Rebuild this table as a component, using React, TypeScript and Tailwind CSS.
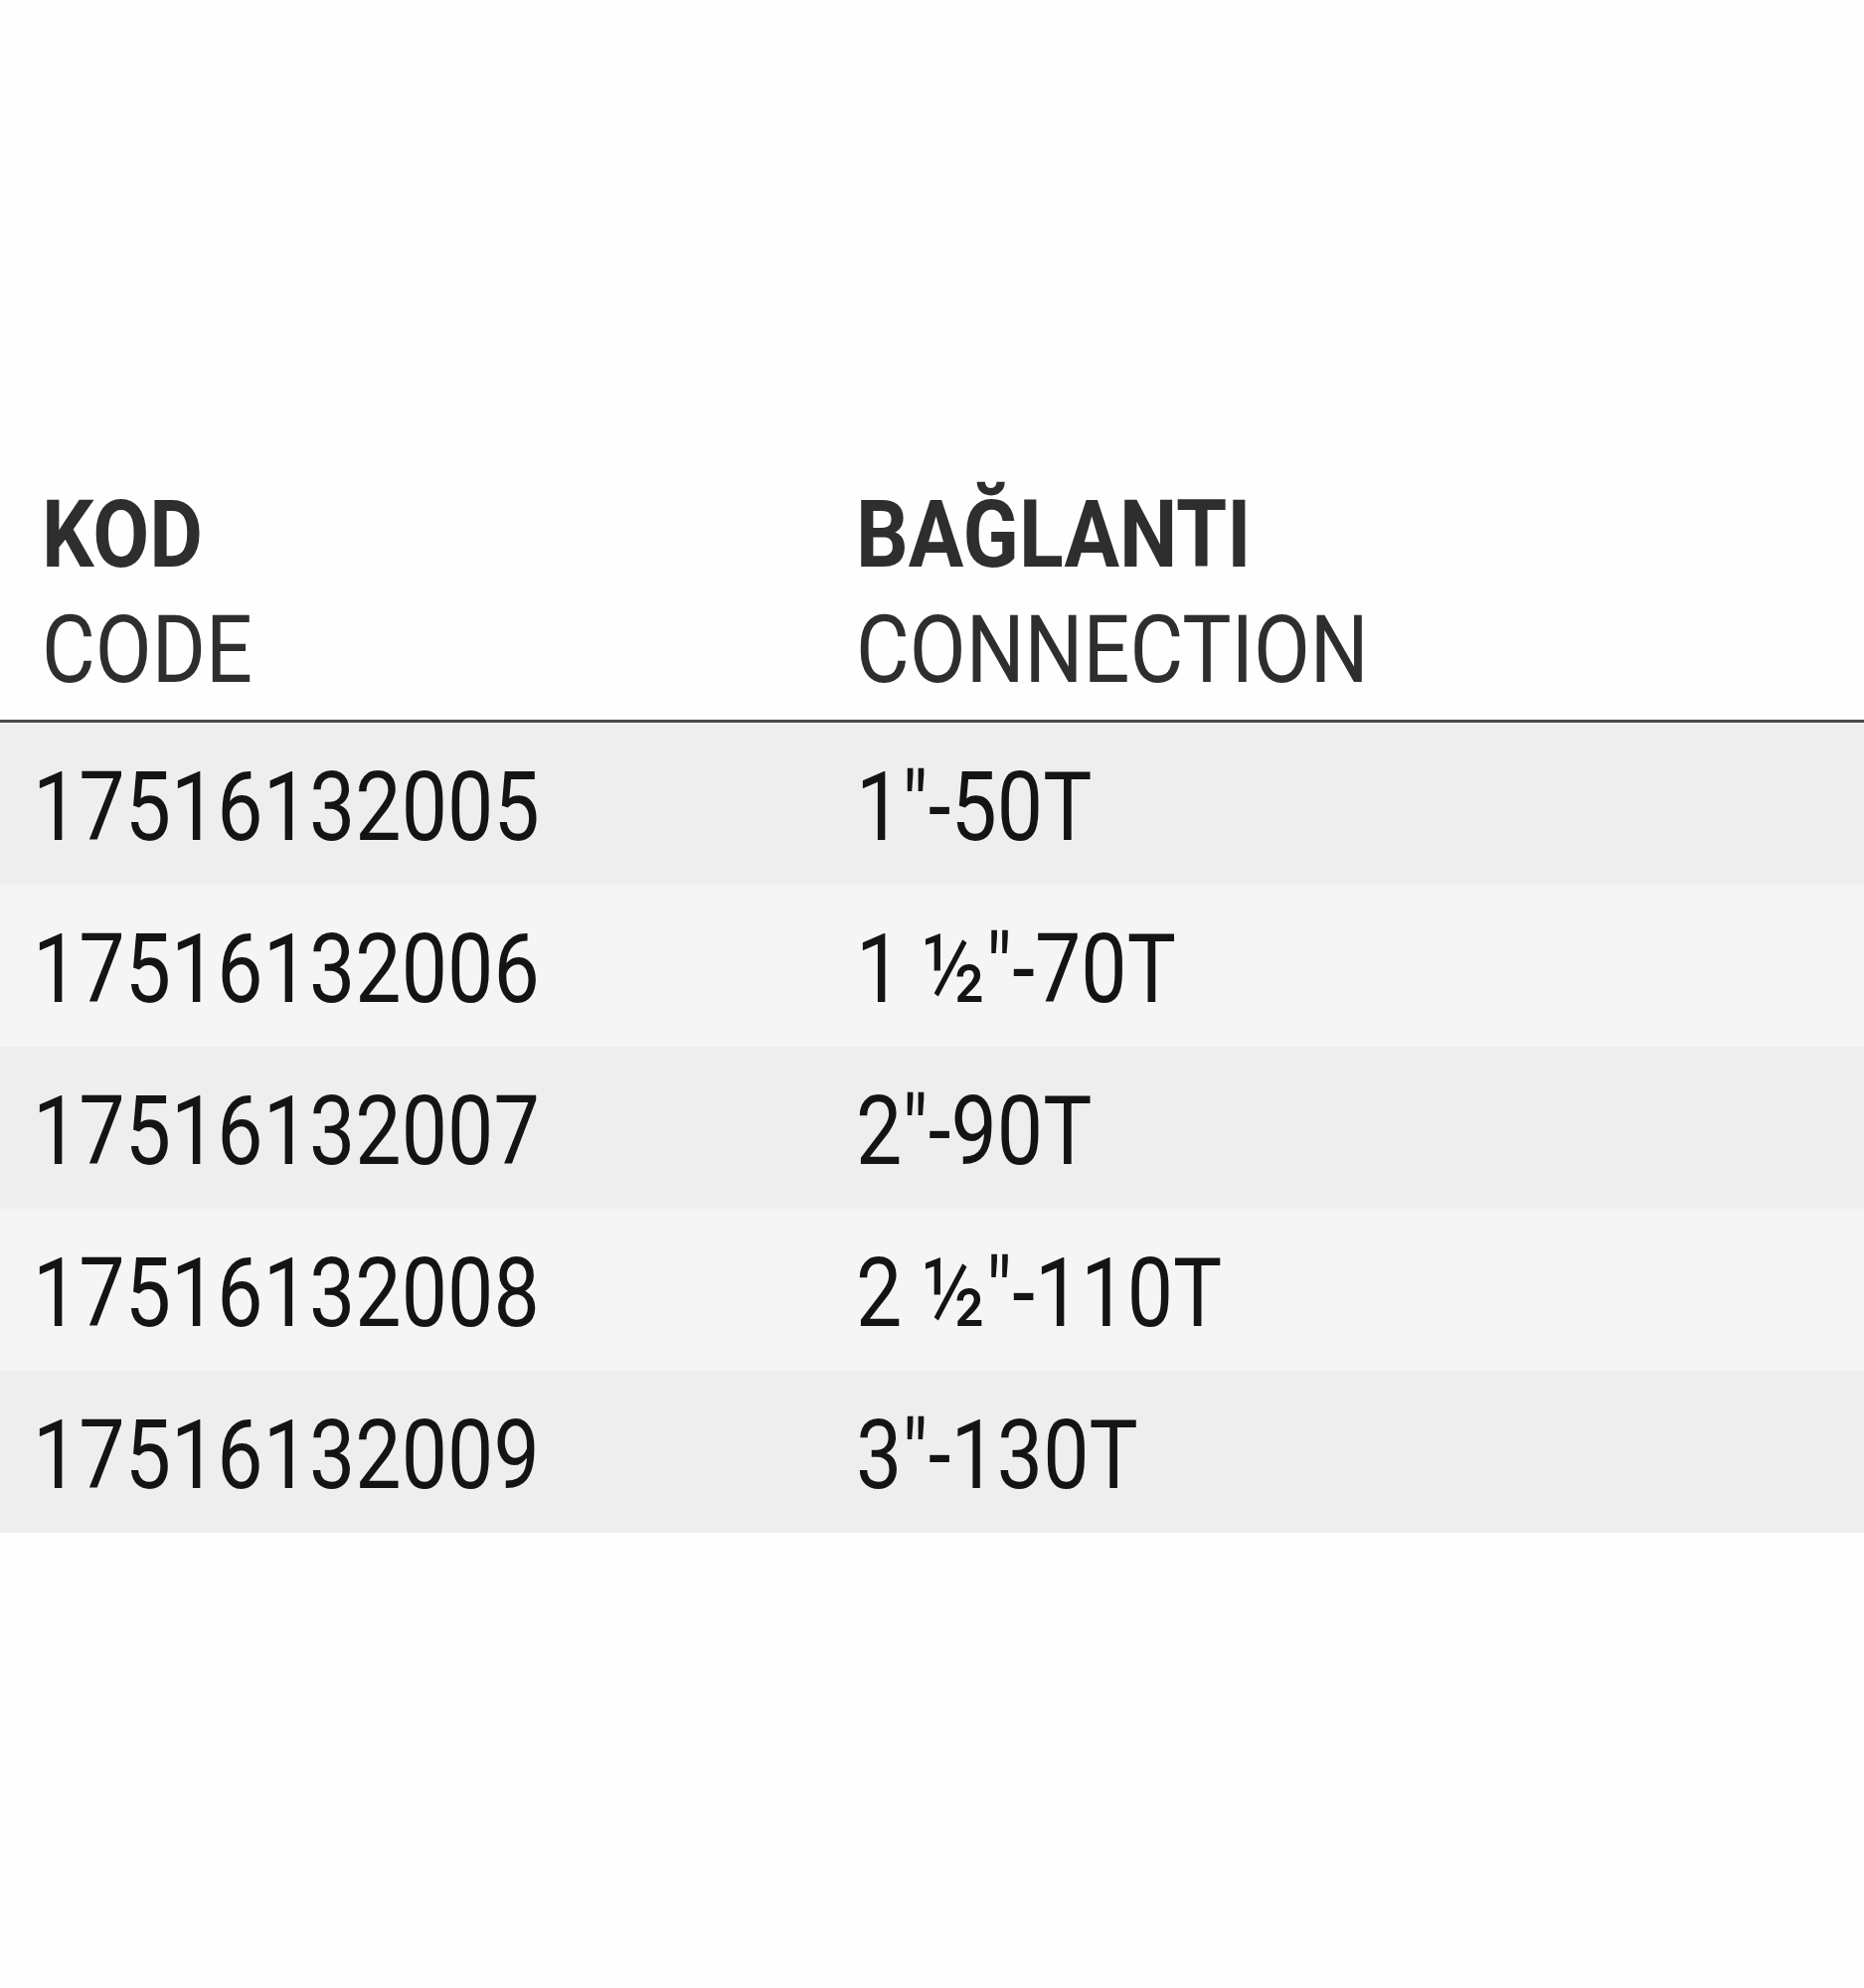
import React from "react";

const rows = [
  ["17516132005", "1\"-50T"],
  ["17516132006", "1 ½\"-70T"],
  ["17516132007", "2\"-90T"],
  ["17516132008", "2 ½\"-110T"],
  ["17516132009", "3\"-130T"],
];

function H({ children, className = "" }: { children: React.ReactNode; className?: string }) {
  return (
    <span className={"inline-block origin-left scale-x-[0.87] whitespace-nowrap " + className}>{children}</span>
  );
}

function T({ children }: { children: React.ReactNode }) {
  return <span className="inline-block origin-left scale-x-[0.85] whitespace-nowrap">{children}</span>;
}

export default function App() {
  return (
    <div
      className="w-[1875px] h-[2000px] bg-[#fefefe] pt-[480px]"
      style={{ fontFamily: 'Roboto, "Liberation Sans", sans-serif' }}
    >
      <div className="flex text-[95px] leading-[116px] text-[#2e2e2e] pb-[12px]">
        <div className="w-[861px] pl-[42px] flex flex-col">
          <H className="font-bold">KOD</H>
          <H>CODE</H>
        </div>
        <div className="flex flex-col">
          <H className="font-bold">BAĞLANTI</H>
          <H>CONNECTION</H>
        </div>
      </div>
      <div className="h-[3px] bg-[#4a4a4a]" />
      <div className="flex flex-col">
        {rows.map((r, i) => (
          <div
            key={r[0]}
            className={
              "flex h-[163px] pt-[9px] text-[97px] leading-[152px] text-[#141414] " +
              (i % 2 === 0 ? "bg-[#eeeeee]" : "bg-[#f5f5f5]")
            }
          >
            <div className="w-[861px] pl-[33px]">
              <T>{r[0]}</T>
            </div>
            <div>
              <T>{r[1]}</T>
            </div>
          </div>
        ))}
      </div>
    </div>
  );
}
